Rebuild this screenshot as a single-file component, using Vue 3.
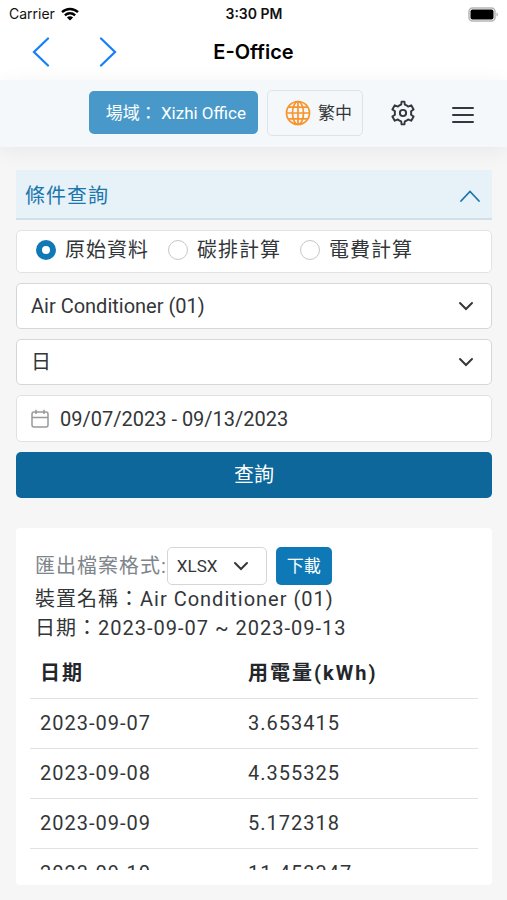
<script setup>
import { ref } from 'vue'

const modes = [
  { id: 'raw', label: '原始資料' },
  { id: 'carbon', label: '碳排計算' },
  { id: 'cost', label: '電費計算' },
]
const mode = ref('raw')
const device = ref('Air Conditioner (01)')
const unit = ref('日')
const range = ref('09/07/2023 - 09/13/2023')
const format = ref('XLSX')
const rows = [
  { date: '2023-09-07', kwh: '3.653415' },
  { date: '2023-09-08', kwh: '4.355325' },
  { date: '2023-09-09', kwh: '5.172318' },
  { date: '2023-09-10', kwh: '11.453347' },
]
</script>

<template>
  <div class="app">
    <div class="status">
      <div class="carrier">
        <span>Carrier</span>
        <svg width="18" height="14" viewBox="0 0 18 14" fill="none" stroke="#000" stroke-width="2.4">
          <path d="M1 5.2C5.500 .9 12.500 .9 17 5.200" />
          <path d="M3.900 8.400C6.800 5.600 11.200 5.600 14.100 8.400" />
          <path d="M9 13.600L5.900 10.500C7.600 8.900 10.400 8.900 12.100 10.500Z" fill="#000" stroke="none" />
        </svg>
      </div>
      <span class="time">3:30 PM</span>
      <div class="battery">
        <svg width="31" height="15" viewBox="0 0 31 15">
          <rect x="1" y="1" width="26" height="13" rx="3.500" fill="#fff" stroke="#b5b5b5" stroke-width="1.500" />
          <rect x="2.500" y="2.500" width="23" height="10" rx="2" fill="#000" />
          <path d="M28.500 5.500C30.400 6 30.400 9 28.500 9.500Z" fill="#b5b5b5" />
        </svg>
      </div>
    </div>

    <header class="nav">
      <div class="arrows">
        <button type="button" aria-label="Back">
          <svg width="18" height="30" viewBox="0 0 18 30"><path d="M16 1.500L2 15L16 28.500" /></svg>
        </button>
        <button type="button" aria-label="Forward">
          <svg width="18" height="30" viewBox="0 0 18 30"><path d="M2 1.500L16 15L2 28.500" /></svg>
        </button>
      </div>
      <h1>E-Office</h1>
    </header>

    <div class="toolbar">
      <button type="button" class="site">場域： Xizhi Office</button>
      <button type="button" class="lang">
        <svg width="26" height="26" viewBox="0 0 26 26" fill="none" stroke="#f7942b" stroke-width="1.700">
          <circle cx="13" cy="13" r="11.500" />
          <ellipse cx="13" cy="13" rx="5.500" ry="11.500" />
          <path d="M13 1.500V24.500M1.500 13H24.500M3.400 7.200H22.600M3.400 18.800H22.600" />
        </svg>
        <span>繁中</span>
      </button>
      <button type="button" class="gear" aria-label="Settings">
        <svg width="26" height="26" viewBox="0 0 24 24" fill="none" stroke="#33383d" stroke-width="1.800" stroke-linejoin="round">
          <path d="M10.325 4.317L10.700 1.500H13.300L13.675 4.317A8 8 0 0 1 16.700 6.050L19.600 4.900L21.800 8.700L19.400 10.400A8 8 0 0 1 19.400 13.600L21.800 15.300L19.600 19.100L16.700 17.950A8 8 0 0 1 13.675 19.683L13.300 22.500H10.700L10.325 19.683A8 8 0 0 1 7.300 17.950L4.400 19.100L2.200 15.300L4.600 13.600A8 8 0 0 1 4.600 10.400L2.200 8.700L4.400 4.900L7.300 6.050A8 8 0 0 1 10.325 4.317Z" />
          <circle cx="12" cy="12" r="2.900" />
        </svg>
      </button>
      <button type="button" class="menu" aria-label="Menu">
        <svg width="22" height="18" viewBox="0 0 22 18" stroke="#33383d" stroke-width="2" stroke-linecap="round">
          <path d="M1 2H21M1 9H21M1 16H21" />
        </svg>
      </button>
    </div>

    <main class="content">
      <form class="filters" @submit.prevent>
        <button type="button" class="toggle">
          <span>條件查詢</span>
          <svg width="22" height="14" viewBox="0 0 22 14" fill="none" stroke="#1a76ac" stroke-width="1.800" stroke-linecap="round">
            <path d="M2 12L11 2.500L20 12" />
          </svg>
        </button>

        <div class="modes" role="radiogroup" aria-label="條件查詢">
          <label v-for="m in modes" :key="m.id">
            <input v-model="mode" type="radio" name="mode" :value="m.id" />
            <span>{{ m.label }}</span>
          </label>
        </div>

        <div class="select">
          <select v-model="device" aria-label="裝置名稱">
            <option>Air Conditioner (01)</option>
          </select>
          <svg class="caret" width="16" height="10" viewBox="0 0 16 10"><path d="M2 2L8 8L14 2" /></svg>
        </div>

        <div class="select">
          <select v-model="unit" aria-label="日期">
            <option>日</option>
          </select>
          <svg class="caret" width="16" height="10" viewBox="0 0 16 10"><path d="M2 2L8 8L14 2" /></svg>
        </div>

        <label class="range">
          <svg width="18" height="20" viewBox="0 0 18 20" fill="none" stroke="#999" stroke-width="1.500">
            <rect x="1" y="3" width="16" height="15" rx="2" />
            <path d="M1 8.500H17M5 .8V5M13 .8V5" />
          </svg>
          <input v-model="range" type="text" aria-label="日期" />
        </label>

        <button type="submit" class="query">查詢</button>
      </form>

      <section class="card">
        <div class="info">
          <div class="export">
            <label for="format">匯出檔案格式:</label>
            <div class="select small">
              <select id="format" v-model="format">
                <option>XLSX</option>
              </select>
              <svg class="caret" width="16" height="10" viewBox="0 0 16 10"><path d="M2 2L8 8L14 2" /></svg>
            </div>
            <button type="button" class="download">下載</button>
          </div>
          <p>裝置名稱：Air Conditioner (01)</p>
          <p>日期：2023-09-07 ~ 2023-09-13</p>
        </div>
        <div class="scroll">
          <table>
            <thead>
              <tr><th scope="col">日期</th><th scope="col">用電量(kWh)</th></tr>
            </thead>
            <tbody>
              <tr v-for="r in rows" :key="r.date"><td>{{ r.date }}</td><td>{{ r.kwh }}</td></tr>
            </tbody>
          </table>
        </div>
      </section>
    </main>
  </div>
</template>

<style>
body {
  background: #f6f6f6;
}
</style>

<style scoped>
* {
  box-sizing: border-box;
}
.app {
  display: flex;
  flex-direction: column;
  height: 100vh;
  color: #333639;
  font: 20px/30px Roboto, "Noto Sans CJK TC", sans-serif;
}
button,
input,
select {
  margin: 0;
  font: inherit;
  color: inherit;
}
button {
  display: flex;
  align-items: center;
  justify-content: center;
  padding: 0;
  border: 0;
  background: none;
}
svg {
  display: block;
  flex: none;
}
.status {
  display: grid;
  grid-template-columns: 1fr auto 1fr;
  align-items: center;
  height: 28px;
  flex: none;
  padding: 0 8px 0 9px;
  background: #fff;
  color: #111;
  font: 14px/20px Inter, sans-serif;
}
.carrier {
  display: flex;
  align-items: center;
  gap: 6px;
}
.time {
  font-weight: 600;
}
.battery {
  justify-self: end;
}
.nav {
  display: grid;
  grid-template-columns: 1fr auto 1fr;
  align-items: center;
  height: 52px;
  flex: none;
  padding: 0 32px 4px;
  background: #fff;
}
.nav h1 {
  margin: 0;
  color: #000;
  font: 600 20px/28px Inter, sans-serif;
}
.arrows {
  display: flex;
  gap: 49px;
}
.arrows path {
  fill: none;
  stroke: #147efb;
  stroke-width: 2.2;
  stroke-linecap: round;
}
.toolbar {
  display: flex;
  align-items: center;
  justify-content: flex-end;
  height: 67px;
  flex: none;
  padding: 0 33px 2px 0;
  background: #f5f8fa;
  box-shadow: 0 4px 20px rgba(0, 0, 0, 0.06);
}
.site {
  height: 43px;
  padding: 0 12px 0 17px;
  border-radius: 5px;
  background: #4899c9;
  color: #fff;
  font-size: 17px;
  white-space: pre;
}
.lang {
  gap: 7px;
  height: 46px;
  margin-left: 9px;
  padding: 0 10px 0 17px;
  border: 1px solid #dfe3e8;
  border-radius: 5px;
  font-size: 17px;
}
.gear {
  margin-left: 27px;
}
.menu {
  margin: 4px 0 0 36px;
}
.content {
  display: flex;
  flex-direction: column;
  flex: 1;
  min-height: 0;
  gap: 30px;
  padding: 23px 15px 15px 16px;
}
.filters {
  display: flex;
  flex-direction: column;
  flex: none;
  gap: 10px;
}
.toggle {
  justify-content: space-between;
  height: 50px;
  padding: 3px 11px 0 9px;
  border-bottom: 2px solid #d0dfe8;
  background: #e6f1f8;
  color: #1a76ac;
  letter-spacing: 1px;
}
.modes {
  display: flex;
  gap: 19px;
  height: 43px;
  padding: 0 19px 3px;
  border: 1px solid #e2e4e4;
  border-radius: 5px;
  background: #fff;
  letter-spacing: 1px;
}
.modes label {
  display: flex;
  align-items: center;
  gap: 9px;
  white-space: nowrap;
}
.modes input {
  appearance: none;
  flex: none;
  width: 20px;
  height: 20px;
  border: 1px solid #c4c6c8;
  border-radius: 50%;
  background: #fff;
}
.modes input:checked {
  border: 6px solid #0f79b7;
}
.select {
  display: grid;
  align-items: center;
}
.select select,
.caret {
  grid-area: 1 / 1;
}
.select select {
  appearance: none;
  width: 100%;
  height: 46px;
  padding: 0 40px 0 14px;
  border: 1px solid #d3d7d9;
  border-radius: 5px;
  background: #fff;
}
.caret {
  justify-self: end;
  margin-right: 18px;
  pointer-events: none;
  fill: none;
  stroke: #33383d;
  stroke-width: 2;
  stroke-linecap: round;
}
.range {
  display: flex;
  align-items: center;
  gap: 11px;
  height: 47px;
  padding: 0 14px;
  border: 1px solid #e0e2e2;
  border-radius: 5px;
  background: #fff;
}
.range input {
  flex: 1;
  min-width: 0;
  padding: 0;
  border: 0;
  background: none;
  outline: 0;
}
.query {
  height: 46px;
  border-radius: 5px;
  background: #0d679b;
  color: #fff;
}
.card {
  display: flex;
  flex-direction: column;
  flex: 1;
  min-height: 0;
  padding: 19px 14px 15px;
  border-radius: 4px;
  background: #fff;
  letter-spacing: 1px;
}
.info {
  flex: none;
  padding: 0 5px;
}
.export {
  display: flex;
  align-items: center;
  letter-spacing: normal;
}
.export label {
  color: #7e858b;
  letter-spacing: 1px;
}
.small {
  width: 100px;
}
.small select {
  height: 38px;
  padding: 0 30px 0 9px;
  font-size: 17px;
}
.download {
  height: 38px;
  margin-left: 9px;
  padding: 0 11px;
  border-radius: 5px;
  background: #0f79b7;
  color: #fff;
  font-size: 17px;
}
.info p {
  margin: 0;
  line-height: 29px;
}
.scroll {
  flex: 1;
  min-height: 0;
  margin-top: 5px;
  overflow-y: auto;
  scrollbar-width: none;
}
table {
  width: 100%;
  border-collapse: collapse;
  table-layout: fixed;
}
th,
td {
  height: 50px;
  padding: 0 10px;
  border-bottom: 1px solid #dee2e4;
  text-align: left;
}
th:first-child {
  width: 208px;
}
th {
  color: #23272b;
  font-weight: 700;
  letter-spacing: 2px;
}
</style>
